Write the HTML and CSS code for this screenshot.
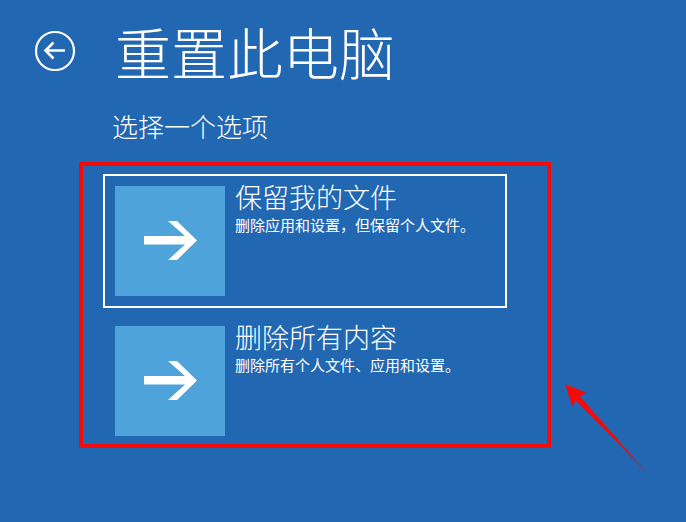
FILE: index.html
```html
<!DOCTYPE html>
<html lang="zh-CN">
<head>
    <meta charset="UTF-8">
    <meta name="viewport" content="width=device-width, initial-scale=1.0">
    <title>重置此电脑</title>
    <link rel="stylesheet" href="styles.css">
</head>
<body>
    <div class="page">
        <div class="header">
            <button class="back" aria-label="返回">
                <svg width="42" height="42" viewBox="0 0 42 42">
                    <circle cx="21" cy="21" r="19" fill="none" stroke="#fff" stroke-width="2.2"/>
                    <path d="M31 20.5H11.5M19.5 12.5L11.5 20.5L19.5 28.5" fill="none" stroke="#fff" stroke-width="2.6"/>
                </svg>
            </button>
            <h1>重置此电脑</h1>
        </div>

        <h2 class="subtitle">选择一个选项</h2>

        <div class="options">
            <div class="option selected">
                <div class="tile">
                    <svg width="110" height="110" viewBox="0 0 110 110">
                        <polygon points="53,35 62,35 82,54.5 62,74 53,74 70,58.5 29,58.5 29,50 70,50" fill="#fff"/>
                    </svg>
                </div>
                <div class="text">
                    <div class="title">保留我的文件</div>
                    <div class="desc">删除应用和设置，但保留个人文件。</div>
                </div>
            </div>
            <div class="option">
                <div class="tile">
                    <svg width="110" height="110" viewBox="0 0 110 110">
                        <polygon points="53,35 62,35 82,54.5 62,74 53,74 70,58.5 29,58.5 29,50 70,50" fill="#fff"/>
                    </svg>
                </div>
                <div class="text">
                    <div class="title">删除所有内容</div>
                    <div class="desc">删除所有个人文件、应用和设置。</div>
                </div>
            </div>
        </div>

        <!-- annotation drawn over the screenshot -->
        <div class="mark-box"></div>
        <svg class="mark-arrow" width="100" height="110" viewBox="0 0 100 110">
            <polygon points="1,2 22,10.5 16,14.5 83.5,91.5 12,18.5 8,24" fill="#f50a0a"/>
        </svg>
    </div>
</body>
</html>
```

FILE: styles.css
```css
body {
    margin: 0;
    background-color: #2267b2;
    color: #fff;
    font-family: "Noto Sans CJK SC", "Noto Sans", sans-serif;
}
.page {
    position: relative;
    width: 686px;
    height: 522px;
    overflow: hidden;
    padding: 13px 0 0 34px;
    box-sizing: border-box;
}
.header {
    display: flex;
    align-items: center;
    gap: 39px;
}
.back {
    width: 42px;
    height: 42px;
    padding: 0;
    border: none;
    background: none;
    display: flex;
}
h1 {
    margin: 0;
    font-size: 56px;
    font-weight: 300;
    line-height: 76px;
}
.subtitle {
    margin: 19px 0 0 78px;
    font-size: 26px;
    font-weight: 300;
    line-height: 36px;
}
.options {
    margin: 30px 0 0 69px;
    width: 404px;
    display: flex;
    flex-direction: column;
    gap: 6px;
}
.option {
    display: flex;
    gap: 10px;
    padding: 10px;
    border: 2px solid transparent;
}
.option.selected {
    border-color: #fff;
}
.tile {
    width: 110px;
    height: 110px;
    background-color: #4ea3da;
    flex-shrink: 0;
}
.tile svg {
    display: block;
}
.title {
    font-size: 27px;
    font-weight: 300;
    line-height: 34px;
    margin-top: -6px;
}
.desc {
    font-size: 15px;
    line-height: 21px;
}
.mark-box {
    position: absolute;
    left: 79px;
    top: 162px;
    width: 472px;
    height: 286px;
    box-sizing: border-box;
    border: 4px solid #f50a0a;
}
.mark-arrow {
    position: absolute;
    left: 564px;
    top: 382px;
}
```
